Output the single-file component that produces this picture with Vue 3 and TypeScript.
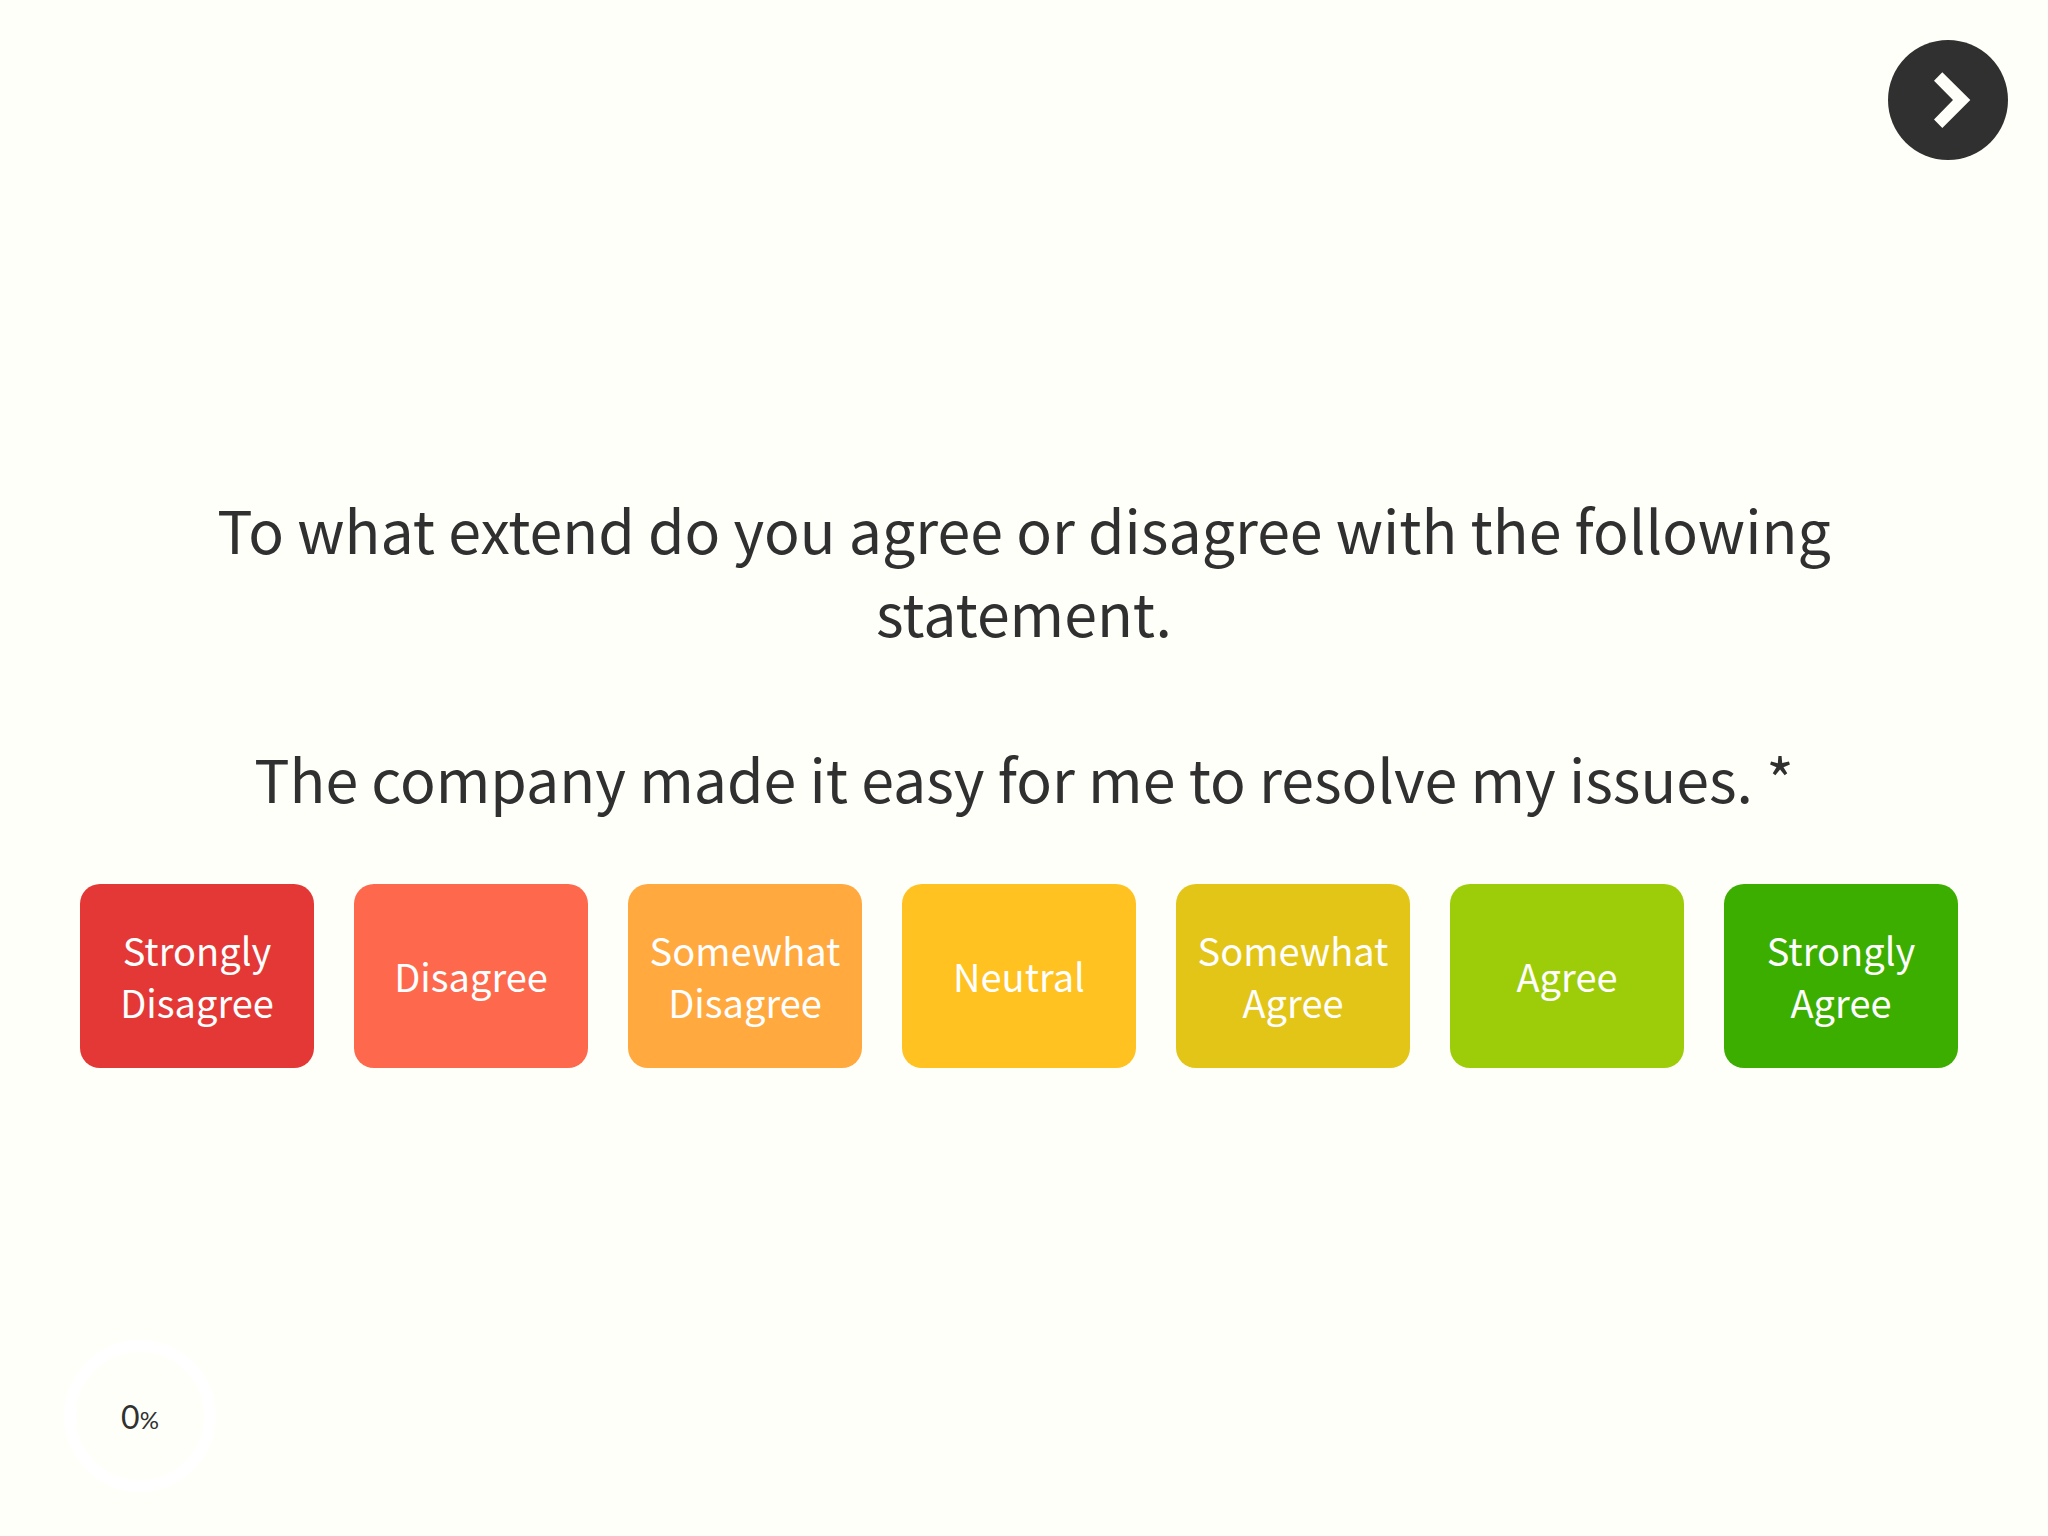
<script setup lang="ts">
import { ref } from 'vue'

interface Choice {
  label: string
  tone: string
}

const choices: Choice[] = [
  { label: 'Strongly Disagree', tone: 'red' },
  { label: 'Disagree', tone: 'coral' },
  { label: 'Somewhat Disagree', tone: 'orange' },
  { label: 'Neutral', tone: 'amber' },
  { label: 'Somewhat Agree', tone: 'mustard' },
  { label: 'Agree', tone: 'lime' },
  { label: 'Strongly Agree', tone: 'green' },
]

const selected = ref<string | null>(null)
const progress = ref<number>(0)
</script>

<template>
  <div class="survey">
    <header class="top">
      <button class="next" type="button" aria-label="Next">
        <svg viewBox="0 0 120 120" aria-hidden="true">
          <path d="M46 40.7 54.3 32.3 82.3 60 54.3 88 46 79.5 65 60Z" fill="#fffffa" />
        </svg>
      </button>
    </header>

    <main class="content">
      <h1 id="question" class="question">
        <span>To what extend do you agree or disagree with the following statement.</span>
        <span>The company made it easy for me to resolve my issues. *</span>
      </h1>
      <div class="choices" role="group" aria-labelledby="question">
        <button
          v-for="choice in choices"
          :key="choice.label"
          type="button"
          class="choice"
          :class="choice.tone"
          :aria-pressed="selected === choice.label"
          @click="selected = choice.label"
        >
          {{ choice.label }}
        </button>
      </div>
    </main>

    <footer class="bottom">
      <div class="progress">
        <span class="value">{{ progress }}</span><span class="unit">%</span>
      </div>
    </footer>
  </div>
</template>

<style>
body {
  background: #fffffa;
}
</style>

<style scoped>
.survey {
  min-height: 100vh;
  display: flex;
  flex-direction: column;
  color: #303030;
  background: #fffffa;
  font-family: 'Noto Sans CJK JP', 'Noto Sans', sans-serif;
}

.top {
  display: flex;
  justify-content: flex-end;
  padding: 40px 40px 54px;
}

.next {
  width: 120px;
  height: 120px;
  padding: 0;
  border: 0;
  border-radius: 50%;
  background: #303030;
  cursor: pointer;
}

.next svg {
  display: block;
  width: 100%;
}

.content {
  flex: 1;
  display: flex;
  flex-direction: column;
  justify-content: center;
  gap: 65px;
}

.question {
  display: flex;
  flex-direction: column;
  gap: 83px;
  margin: 0;
  padding: 0 160px;
  font-size: 59px;
  font-weight: 400;
  line-height: 83px;
  text-align: center;
}

.choices {
  display: grid;
  grid-template-columns: repeat(7, 1fr);
  gap: 40px;
  padding: 0 90px 0 80px;
}

.choice {
  min-height: 184px;
  padding: 0 16px;
  border: 0;
  border-radius: 20px;
  color: #fff;
  font-family: inherit;
  font-size: 38px;
  font-weight: 400;
  line-height: 52px;
  text-align: center;
  cursor: pointer;
}

.red { background: #e43836; }
.coral { background: #fe684c; }
.orange { background: #ffa93f; }
.amber { background: #ffc220; }
.mustard { background: #e3c518; }
.lime { background: #9dcd09; }
.green { background: #3cae00; }

.bottom {
  padding: 0 64px 44px;
}

.progress {
  box-sizing: border-box;
  width: 152px;
  height: 152px;
  display: flex;
  align-items: baseline;
  justify-content: center;
  border: 12px solid #fff;
  border-radius: 50%;
  font-family: Lato, sans-serif;
  line-height: 130px;
}

.value {
  font-size: 32px;
}

.unit {
  font-size: 24px;
}
</style>
